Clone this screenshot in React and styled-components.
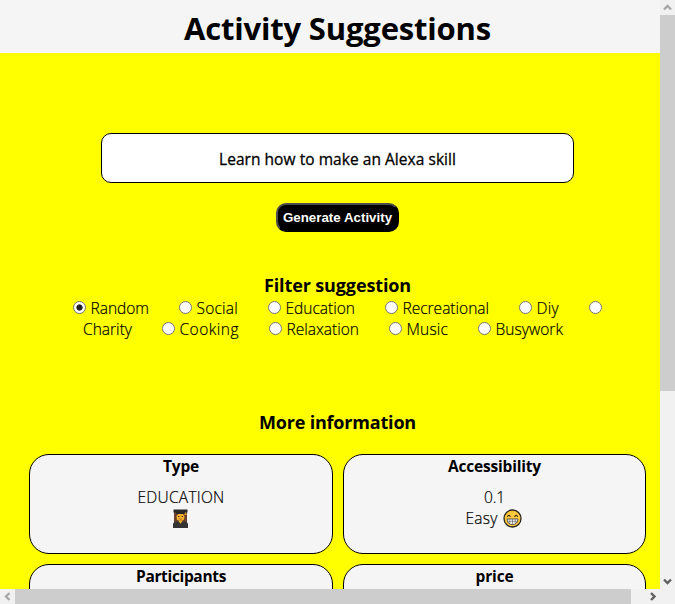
import React, { useLayoutEffect, useRef } from 'react';
import styled, { createGlobalStyle } from 'styled-components';

const GlobalStyle = createGlobalStyle`
  *, *::before, *::after { box-sizing: border-box; }
  body {
    margin: 0;
    overflow: hidden;
    color: #000;
    font-family: "Open Sans", "Noto Sans", sans-serif;
  }
  h1, h2, h3, p { margin: 0; }
`;

const Window = styled.div`
  display: grid;
  grid-template-columns: 660px 15px;
  grid-template-rows: 589px 15px;
  width: 675px;
  height: 604px;
  background: #f1f1f1;
`;

const Viewport = styled.div`
  overflow: hidden;
  background: #ff0;
`;

const Page = styled.div`
  width: 675px;
  height: 740px;
  background: #ff0;
`;

const Header = styled.header`
  height: 53px;
  padding-top: 4px;
  background: #f5f5f5;
  text-align: center;
`;

const Title = styled.h1`
  font-size: 31px;
  line-height: 49px;
  font-weight: 700;
`;

const Suggestion = styled.p`
  width: 473px;
  height: 50px;
  margin: 80px auto 20px;
  border: 1px solid #000;
  border-radius: 10px;
  background: #fff;
  font-size: 15.5px;
  font-weight: 400;
  -webkit-text-stroke: 0.3px #000;
  line-height: 51px;
  text-align: center;
`;

const GenerateButton = styled.button`
  display: block;
  width: 123px;
  height: 29px;
  margin: 0 auto;
  padding: 0;
  border: 2px outset #000;
  border-color: #4d4d4d #000 #000 #4d4d4d;
  border-radius: 10px;
  background: #000;
  color: #fff;
  font: 700 13.33px/23px "Liberation Sans", Arial, sans-serif;
  text-align: center;
`;

const SectionTitle = styled.h2`
  height: 25px;
  font-size: 18px;
  font-weight: 700;
  line-height: 25px;
  text-align: center;
`;

const Filters = styled.section`
  margin-top: 41px;
`;

const FilterRow = styled.div`
  display: flex;
  gap: 30px;
  height: 21px;
  padding-left: ${(p) => p.$indent}px;
`;

const Choice = styled.label`
  display: flex;
  gap: 4.5px;
  font-size: 15.5px;
  font-weight: 300;
  -webkit-text-stroke: 0.2px #000;
  line-height: 21px;
`;

const Radio = styled.input.attrs({ type: 'radio', name: 'filter' })`
  appearance: none;
  flex: none;
  width: 13px;
  height: 13px;
  margin: 3px 0 0;
  border: 1px solid #767676;
  border-radius: 50%;
  background: #fff;

  &:checked {
    background: radial-gradient(circle, #222 0 2.7px, #fff 3.5px);
  }
`;

const Details = styled.section`
  margin-top: 70px;
`;

const Cards = styled.div`
  display: grid;
  grid-template-columns: 304px 303px;
  grid-auto-rows: 100px;
  gap: 10px;
  margin: 19px 0 0 29px;
`;

const Card = styled.article`
  border: 1px solid #000;
  border-radius: 20px;
  background: #f5f5f5;
  text-align: center;
`;

const CardTitle = styled.h3`
  height: 32px;
  font-size: 15.5px;
  font-weight: 700;
  line-height: 22px;
`;

const CardLine = styled.p`
  display: flex;
  justify-content: center;
  align-items: center;
  gap: 5px;
  height: 21px;
  padding-right: ${(p) => (p.$icon ? 2 : 0)}px;
  font-size: 15.5px;
  font-weight: 300;
  -webkit-text-stroke: 0.2px #000;
  line-height: 21px;
`;

const Measured = styled.span`
  display: inline-block;
  white-space: nowrap;
  text-align: left;
`;

const VerticalBar = styled.div`
  display: flex;
  flex-direction: column;
  height: 589px;
`;

const HorizontalBar = styled.div`
  display: flex;
  width: 660px;
`;

const Track = styled.div`
  flex: 1;
`;

const VerticalThumb = styled.div`
  height: 376px;
  background: #cdcdcd;
`;

const HorizontalThumb = styled.div`
  width: 616px;
  height: 15px;
  background: #cdcdcd;
`;

const ArrowIcon = styled.svg`
  display: block;
  flex: none;
  width: 15px;
  height: 15px;
  fill: none;
  stroke: ${(p) => (p.$active ? '#606060' : '#a8a8a8')};
  stroke-width: 2.4;
`;

const GraduateIcon = styled.svg`
  width: 15px;
  height: 19px;
`;

const GrinIcon = styled.svg`
  width: 19px;
  height: 19px;
`;

/* Spreads its letters evenly so the word takes the given advance width. */
function Word({ width, children }) {
  const ref = useRef(null);
  useLayoutEffect(() => {
    const el = ref.current;
    el.style.letterSpacing = '0px';
    el.style.width = 'auto';
    const natural = el.getBoundingClientRect().width;
    el.style.letterSpacing = `${(width - natural) / children.length}px`;
    el.style.width = `${width}px`;
  }, [width, children]);
  return <Measured ref={ref}>{children}</Measured>;
}

const arrows = {
  up: 'M4 9.5 7.5 6 11 9.5',
  down: 'M4 5.5 7.5 9 11 5.5',
  left: 'M9.5 4 6 7.5 9.5 11',
  right: 'M6 4 9.5 7.5 6 11',
};

function Arrow({ dir, active }) {
  return (
    <ArrowIcon $active={active} viewBox="0 0 15 15" aria-hidden="true">
      <path d={arrows[dir]} />
    </ArrowIcon>
  );
}

function Graduate() {
  return (
    <GraduateIcon viewBox="0 0 15 19" aria-label="Student">
      <path d="M1 3H14V18H1Z" fill="#68402c" />
      <path d="M0 19V14.500Q.5 13 4 12.500H11Q14.500 13 15 14.500V19Z" fill="#343434" />
      <path d="M5.500 12H9.500L7.500 14.800Z" fill="#f5b82e" />
      <rect x="3.600" y="4.600" width="7.800" height="7.200" rx="3.200" fill="#f5b030" />
      <path d="M3.500 7.200 5 5H10L11.500 7.200V4.500H3.500Z" fill="#70442c" />
      <path d="M.5 .5H14.500V3.500H12V5H3V3.500H.5Z" fill="#292929" />
      <path d="M12.500 3.500V6M11 5.200H14" stroke="#d79725" strokeWidth="1" />
      <path d="M5.200 7.500H6.400M8.700 7.500H9.900" stroke="#382514" strokeWidth="1.100" />
      <path d="M6.200 10H8.800" stroke="#92501e" strokeWidth=".7" />
    </GraduateIcon>
  );
}

function Grin() {
  return (
    <GrinIcon viewBox="0 0 19 19" aria-label="Grinning face">
      <circle cx="9.500" cy="9.500" r="8.500" fill="#ffc83d" stroke="#28231b" strokeWidth="1.300" />
      <path d="M4.300 7.700Q5.900 5 7.500 7.700M11.500 7.700Q13.100 5 14.700 7.700" fill="none" stroke="#35291a" strokeWidth="1.100" />
      <path d="M4 10H15Q14.500 15.500 9.500 15.500T4 10Z" fill="#fff" stroke="#464646" strokeWidth=".9" />
      <path d="M4.400 12.300H14.600M6.800 10.300V14.600M9.500 10.300V15.300M12.200 10.300V14.600" stroke="#626262" strokeWidth=".7" />
    </GrinIcon>
  );
}

function Filter({ label, width, checked }) {
  return (
    <Choice>
      <Radio defaultChecked={checked} />
      {label && <Word width={width}>{label}</Word>}
    </Choice>
  );
}

export default function App() {
  return (
    <>
      <GlobalStyle />
      <Window>
        <Viewport>
          <Page>
            <Header>
              <Title><Word width={307}>Activity Suggestions</Word></Title>
            </Header>
            <Suggestion><Word width={237}>Learn how to make an Alexa skill</Word></Suggestion>
            <GenerateButton>Generate Activity</GenerateButton>
            <Filters>
              <SectionTitle><Word width={147}>Filter suggestion</Word></SectionTitle>
              <FilterRow $indent={73}>
                <Filter label="Random" width={58.5} checked />
                <Filter label="Social" width={41.5} />
                <Filter label="Education" width={69.5} />
                <Filter label="Recreational" width={86.5} />
                <Filter label="Diy" width={22.5} />
                <Filter />
              </FilterRow>
              <FilterRow $indent={83}>
                <Choice><Word width={49}>Charity</Word></Choice>
                <Filter label="Cooking" width={59.5} />
                <Filter label="Relaxation" width={72.5} />
                <Filter label="Music" width={41.5} />
                <Filter label="Busywork" width={67.5} />
              </FilterRow>
            </Filters>
            <Details>
              <SectionTitle><Word width={157}>More information</Word></SectionTitle>
              <Cards>
                <Card>
                  <CardTitle><Word width={36}>Type</Word></CardTitle>
                  <CardLine><Word width={87}>EDUCATION</Word></CardLine>
                  <CardLine $icon><Graduate /></CardLine>
                </Card>
                <Card>
                  <CardTitle><Word width={93}>Accessibility</Word></CardTitle>
                  <CardLine><Word width={21}>0.1</Word></CardLine>
                  <CardLine $icon><Word width={32}>Easy</Word><Grin /></CardLine>
                </Card>
                <Card>
                  <CardTitle><Word width={90}>Participants</Word></CardTitle>
                </Card>
                <Card>
                  <CardTitle><Word width={38}>price</Word></CardTitle>
                </Card>
              </Cards>
            </Details>
          </Page>
        </Viewport>
        <VerticalBar>
          <Arrow dir="up" />
          <VerticalThumb />
          <Track />
          <Arrow dir="down" active />
        </VerticalBar>
        <HorizontalBar>
          <Arrow dir="left" />
          <HorizontalThumb />
          <Track />
          <Arrow dir="right" active />
        </HorizontalBar>
      </Window>
    </>
  );
}
